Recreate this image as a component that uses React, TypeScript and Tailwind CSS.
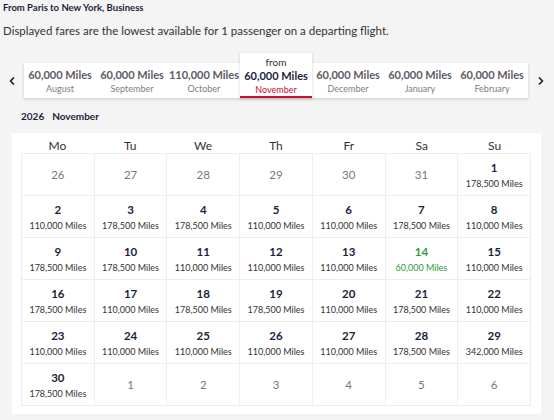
import { ChevronLeft, ChevronRight } from "lucide-react";

type Day = { n: number; miles?: string; out?: boolean; best?: boolean };

const months = [
	{ miles: "60,000 Miles", name: "August" },
	{ miles: "60,000 Miles", name: "September" },
	{ miles: "110,000 Miles", name: "October" },
	{ miles: "60,000 Miles", name: "November", active: true },
	{ miles: "60,000 Miles", name: "December" },
	{ miles: "60,000 Miles", name: "January" },
	{ miles: "60,000 Miles", name: "February" },
];

const A = "178,500 Miles";
const B = "110,000 Miles";

const days: Day[] = [
	{ n: 26, out: true }, { n: 27, out: true }, { n: 28, out: true }, { n: 29, out: true }, { n: 30, out: true }, { n: 31, out: true }, { n: 1, miles: A },
	{ n: 2, miles: B }, { n: 3, miles: A }, { n: 4, miles: A }, { n: 5, miles: B }, { n: 6, miles: B }, { n: 7, miles: A }, { n: 8, miles: B },
	{ n: 9, miles: A }, { n: 10, miles: A }, { n: 11, miles: B }, { n: 12, miles: B }, { n: 13, miles: B }, { n: 14, miles: "60,000 Miles", best: true }, { n: 15, miles: B },
	{ n: 16, miles: A }, { n: 17, miles: B }, { n: 18, miles: A }, { n: 19, miles: A }, { n: 20, miles: B }, { n: 21, miles: A }, { n: 22, miles: B },
	{ n: 23, miles: B }, { n: 24, miles: B }, { n: 25, miles: B }, { n: 26, miles: B }, { n: 27, miles: B }, { n: 28, miles: A }, { n: 29, miles: "342,000 Miles" },
	{ n: 30, miles: A }, { n: 1, out: true }, { n: 2, out: true }, { n: 3, out: true }, { n: 4, out: true }, { n: 5, out: true }, { n: 6, out: true },
];

const weekdays = ["Mo", "Tu", "We", "Th", "Fr", "Sa", "Su"];

const DayCell = ({ day }: { day: Day }) => {
	if (day.out) {
		return (
			<div className="h-[42px] border-r border-b border-[#eeeeee] flex items-center justify-center text-[11.5px] text-[#777777]">
				{day.n}
			</div>
		);
	}
	const color = day.best ? "text-[#2f9a3c]" : "text-[#1b1f3b]";
	return (
		<div className="h-[42px] border-r border-b border-[#eeeeee] flex flex-col items-center pt-[7px]">
			<p className={`text-[11.5px] leading-[14px] font-bold ${color}`}>{day.n}</p>
			<p className={`text-[9px] leading-[12px] mt-[3px] ${day.best ? "text-[#2f9a3c]" : "text-[#333333]"}`}>{day.miles}</p>
		</div>
	);
};

export default function App() {
	return (
		<div className="w-[554px] h-[420px] bg-[#f4f4f4] overflow-hidden font-['Lato',sans-serif] text-[#333333]">
			<p className="pl-[3px] pt-[2px] text-[9.5px] leading-[12px] font-bold text-[#1b1f3b]">
				From Paris to New York, Business
			</p>
			<p className="pl-[3px] mt-[9px] text-[11.5px] leading-[16px] text-[#333333]">
				Displayed fares are the lowest available for 1 passenger on a departing flight.
			</p>

			<div className="flex items-end mt-[14px] h-[45px]">
				<div className="w-[24px] h-[35px] flex items-center justify-center text-[#1b1f3b]">
					<ChevronLeft size={12} strokeWidth={3.5} />
				</div>
				<div className="w-[504px] h-[35px] bg-white flex items-end shadow-[0_1px_3px_rgba(0,0,0,0.18)]">
					{months.map((m) =>
						m.active ? (
							<div
								key={m.name}
								className="w-[72px] h-[45px] bg-white flex flex-col items-center border-b-2 border-[#c8102e] shadow-[0_1px_3px_rgba(0,0,0,0.18)]"
							>
								<p className="mt-[3px] text-[10px] leading-[13px] text-[#333333]">from</p>
								<p className="text-[11px] leading-[14px] font-bold text-[#1b1f3b]">{m.miles}</p>
								<p className="mt-[1px] text-[9px] leading-[12px] text-[#c8102e]">{m.name}</p>
							</div>
						) : (
							<div key={m.name} className="w-[72px] h-[35px] flex flex-col items-center pt-[5px]">
								<p className="text-[11px] leading-[14px] font-bold text-[#5b5b66]">{m.miles}</p>
								<p className="mt-[1px] text-[9px] leading-[12px] text-[#7d7d7d]">{m.name}</p>
							</div>
						)
					)}
				</div>
				<div className="w-[25px] h-[35px] flex items-center justify-center text-[#1b1f3b]">
					<ChevronRight size={12} strokeWidth={3.5} />
				</div>
			</div>

			<div className="flex gap-[8px] pl-[21px] mt-[12px] text-[10px] leading-[12px] font-bold text-[#1b1f3b]">
				<span>2026</span>
				<span>November</span>
			</div>

			<div className="ml-[12px] mt-[11px] w-[529px] bg-white pl-[9px] pr-[10px] pb-[8px]">
				<div className="grid grid-cols-7 h-[20px]">
					{weekdays.map((w) => (
						<div key={w} className="pt-[6px] text-center text-[12px] leading-[14px] text-[#333333]">
							{w}
						</div>
					))}
				</div>
				<div className="grid grid-cols-7 border-l border-t border-[#eeeeee]">
					{days.map((d, i) => (
						<DayCell key={i} day={d} />
					))}
				</div>
			</div>
		</div>
	);
}
